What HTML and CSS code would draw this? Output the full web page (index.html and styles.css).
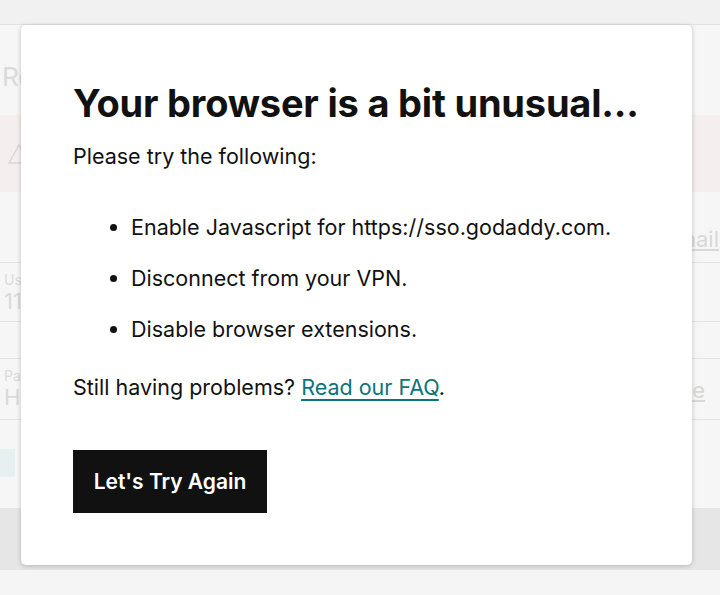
FILE: index.html
```html
<!DOCTYPE html>
<html lang="en">
<head>
<meta charset="utf-8">
<title>Your browser is a bit unusual</title>
<link rel="stylesheet" href="styles.css">
</head>
<body>
<div class="page">
  <header class="topbar"></header>
  <main class="content">
    <div class="heading-ghost">Review</div>
    <div class="alert">
      <svg class="alert-icon" width="24" height="22" viewBox="0 0 24 22"><path d="M12 2 L22 20 H2 Z" fill="none" stroke="#dcd6d6" stroke-width="1.5"/></svg>
    </div>
    <div class="link-row"><span class="ghost-link">email</span></div>
    <div class="field">
      <span class="field-label">Username</span>
      <span class="field-value">1100</span>
    </div>
    <div class="spacer"></div>
    <div class="field field-2">
      <span class="field-label">Password</span>
      <span class="field-value">HHHH</span>
      <span class="ghost-link field-toggle">Hide</span>
    </div>
    <div class="check-row"><span class="checkbox"></span></div>
    <div class="ghost-button"></div>
    <div class="footer-ghost"></div>
  </main>
</div>

<div class="modal" role="dialog" aria-labelledby="modal-title">
  <h1 id="modal-title" class="modal-title">Your browser is a bit unusual...</h1>
  <p class="modal-text">Please try the following:</p>
  <ul class="modal-list">
    <li>Enable Javascript for https://sso.godaddy.com.</li>
    <li>Disconnect from your VPN.</li>
    <li>Disable browser extensions.</li>
  </ul>
  <p class="modal-text">Still having problems? <a class="modal-link" href="#">Read our FAQ</a>.</p>
  <button class="modal-button" type="button">Let's Try Again</button>
</div>
</body>
</html>
```

FILE: styles.css
```css
html, body {
  margin: 0;
  padding: 0;
}
body {
  width: 720px;
  height: 595px;
  overflow: hidden;
  background: #f4f4f4;
  font-family: "Inter", "Noto Sans", sans-serif;
  color: #111;
  position: relative;
}
.page {
  display: flex;
  flex-direction: column;
}
.topbar {
  height: 24px;
  background: #f1f1f1;
  border-bottom: 1px solid #e2e2e2;
}
.content {
  display: flex;
  flex-direction: column;
  background: #f6f6f6;
}
.heading-ghost {
  height: 90px;
  padding-top: 36px;
  box-sizing: border-box;
  font-size: 26px;
  color: #dadada;
  padding-left: 2px;
}
.alert {
  height: 77px;
  background: #f5eeee;
  display: flex;
  align-items: center;
  padding-left: 7px;
}
.link-row {
  height: 70px;
  display: flex;
  justify-content: flex-end;
  align-items: flex-end;
  padding-bottom: 10px;
  padding-right: 1px;
  box-sizing: border-box;
}
.ghost-link {
  color: #d8d8d8;
  font-size: 22px;
  text-decoration: underline;
}
.field {
  height: 60px;
  border-top: 1px solid #e4e4e4;
  border-bottom: 1px solid #e4e4e4;
  display: flex;
  flex-direction: column;
  padding: 8px 0 0 4px;
  box-sizing: border-box;
  position: relative;
  color: #dadada;
}
.field-label { font-size: 14px; }
.field-value { font-size: 22px; }
.spacer { height: 36px; }
.field-2 { height: 62px; }
.field-toggle {
  position: absolute;
  right: 15px;
  top: 18px;
}
.check-row {
  height: 88px;
  display: flex;
  align-items: center;
}
.checkbox {
  width: 15px;
  height: 28px;
  background: #e6f0f0;
  margin-top: -3px;
}
.ghost-button {
  height: 62px;
  background: #e6e6e6;
}
.footer-ghost {
  height: 40px;
  background: #f5f5f5;
}

/* Modal */
.modal {
  position: absolute;
  left: 21px;
  top: 25px;
  width: 671px;
  height: 540px;
  box-sizing: border-box;
  background: #fff;
  border-radius: 5px;
  box-shadow: 0 1px 5px rgba(0, 0, 0, 0.22);
  padding: 55px 40px 0 52px;
  display: flex;
  flex-direction: column;
  align-items: flex-start;
}
.modal-title {
  margin: 0;
  font-size: 38px;
  line-height: 46px;
  font-weight: 700;
  letter-spacing: -0.2px;
  white-space: nowrap;
  color: #111;
}
.modal-text {
  margin: 0;
  font-size: 21.5px;
  line-height: 28px;
  color: #111;
}
.modal-title + .modal-text {
  margin-top: 16px;
}
.modal-list {
  margin: 43px 0 0 0;
  padding: 0 0 0 58px;
  font-size: 21.5px;
  line-height: 28px;
  display: flex;
  flex-direction: column;
  gap: 23px;
}
.modal-list + .modal-text {
  margin-top: 30px;
}
.modal-link {
  color: #09757a;
  text-decoration: underline;
  text-underline-offset: 4px;
}
.modal-button {
  margin-top: 49px;
  width: 194px;
  height: 63px;
  background: #111;
  color: #fff;
  border: none;
  border-radius: 0;
  font-family: inherit;
  font-size: 21px;
  font-weight: 600;
  padding: 0;
}
```
